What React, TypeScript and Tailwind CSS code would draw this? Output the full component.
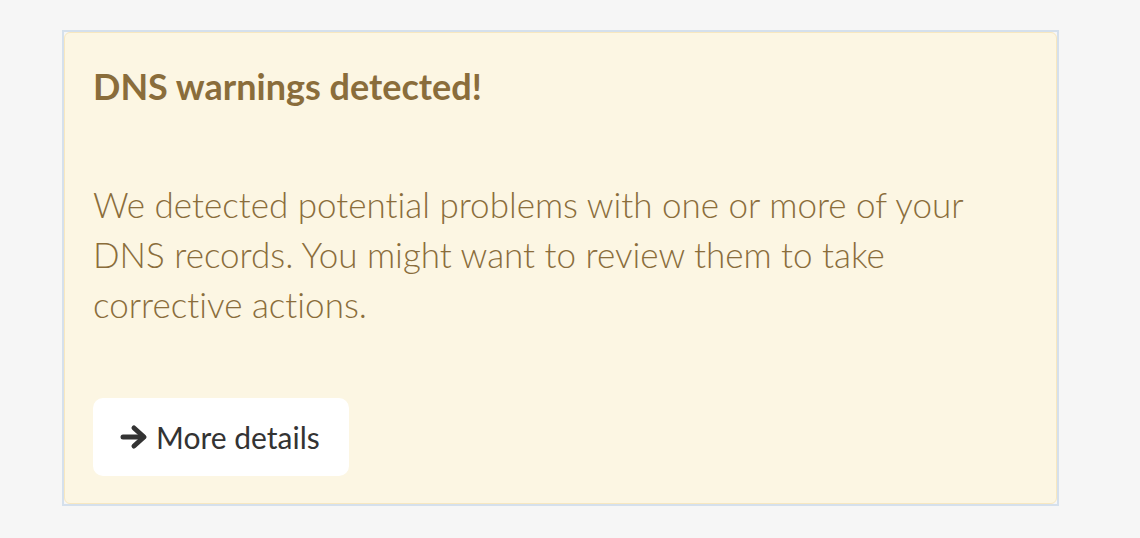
import React from "react";

function Arrow() {
  return (
    <svg width="28" height="26" viewBox="0 0 28 26" fill="none" stroke="#333333" strokeWidth="5" strokeLinecap="round" strokeLinejoin="round">
      <line x1="3" y1="13" x2="23" y2="13" />
      <polyline points="14,4 24,13 14,22" />
    </svg>
  );
}

export default function App() {
  return (
    <div className="min-h-[538px] w-full bg-[#f6f6f6] pt-[30px] pl-[62px] [font-variant-ligatures:none]" style={{ fontFamily: "Lato, 'Open Sans', sans-serif" }}>
      <div className="w-[997px] h-[476px] border-2 border-[#d5e0ec]">
        <div className="h-full rounded-[6px] border border-[#f7e7c0] bg-[#fcf6e3] pl-[28px] pr-[28px] pt-[33px]">
          <h2 className="text-[36px] leading-[40px] font-bold text-[#8a6d3b]">DNS warnings detected!</h2>
          <p className="mt-[73px] text-[35px] leading-[50px] font-light text-[#8a6d3b] max-w-[900px]">
            We detected potential problems with one or more of your DNS records. You might want to review them to take corrective actions.
          </p>
          <button className="mt-[69px] flex items-center gap-[8px] h-[78px] w-[256px] rounded-[10px] bg-white pl-[27px] text-[30px] text-[#333333]">
            <Arrow />
            <span>More details</span>
          </button>
        </div>
      </div>
    </div>
  );
}
